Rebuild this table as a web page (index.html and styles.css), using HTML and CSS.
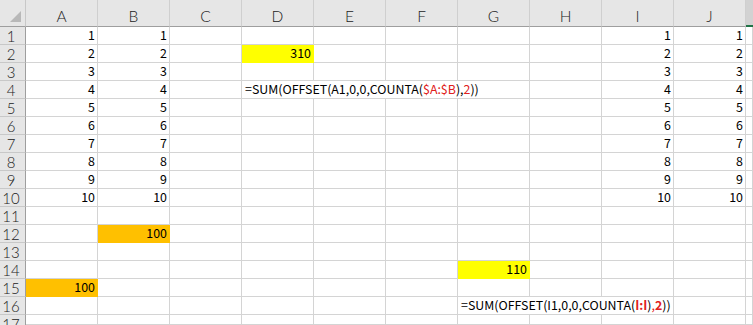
FILE: index.html
```html
<!DOCTYPE html>
<html>
<head>
<meta charset="utf-8">
<link rel="stylesheet" href="styles.css">
</head>
<body>
<div class="sheet">
  <div class="row head">
    <div class="corner"><span class="tri"></span></div>
    <div class="ch">A</div><div class="ch">B</div><div class="ch">C</div><div class="ch">D</div><div class="ch">E</div><div class="ch">F</div><div class="ch">G</div><div class="ch">H</div><div class="ch">I</div><div class="ch">J</div><div class="ch sel"></div>
  </div>
  <div class="row"><div class="rh">1</div><div class="c n">1</div><div class="c n">1</div><div class="c"></div><div class="c"></div><div class="c"></div><div class="c"></div><div class="c"></div><div class="c"></div><div class="c n">1</div><div class="c n">1</div><div class="c"></div></div>
  <div class="row"><div class="rh">2</div><div class="c n">2</div><div class="c n">2</div><div class="c"></div><div class="c n yellow">310</div><div class="c"></div><div class="c"></div><div class="c"></div><div class="c"></div><div class="c n">2</div><div class="c n">2</div><div class="c"></div></div>
  <div class="row"><div class="rh">3</div><div class="c n">3</div><div class="c n">3</div><div class="c"></div><div class="c"></div><div class="c"></div><div class="c"></div><div class="c"></div><div class="c"></div><div class="c n">3</div><div class="c n">3</div><div class="c"></div></div>
  <div class="row"><div class="rh">4</div><div class="c n">4</div><div class="c n">4</div><div class="c"></div><div class="c f span4">=SUM(OFFSET(A1,0,0,COUNTA(<span class="ref">$A:$B</span>),<span class="ref">2</span>))</div><div class="c"></div><div class="c n">4</div><div class="c n">4</div><div class="c"></div></div>
  <div class="row"><div class="rh">5</div><div class="c n">5</div><div class="c n">5</div><div class="c"></div><div class="c"></div><div class="c"></div><div class="c"></div><div class="c"></div><div class="c"></div><div class="c n">5</div><div class="c n">5</div><div class="c"></div></div>
  <div class="row"><div class="rh">6</div><div class="c n">6</div><div class="c n">6</div><div class="c"></div><div class="c"></div><div class="c"></div><div class="c"></div><div class="c"></div><div class="c"></div><div class="c n">6</div><div class="c n">6</div><div class="c"></div></div>
  <div class="row"><div class="rh">7</div><div class="c n">7</div><div class="c n">7</div><div class="c"></div><div class="c"></div><div class="c"></div><div class="c"></div><div class="c"></div><div class="c"></div><div class="c n">7</div><div class="c n">7</div><div class="c"></div></div>
  <div class="row"><div class="rh">8</div><div class="c n">8</div><div class="c n">8</div><div class="c"></div><div class="c"></div><div class="c"></div><div class="c"></div><div class="c"></div><div class="c"></div><div class="c n">8</div><div class="c n">8</div><div class="c"></div></div>
  <div class="row"><div class="rh">9</div><div class="c n">9</div><div class="c n">9</div><div class="c"></div><div class="c"></div><div class="c"></div><div class="c"></div><div class="c"></div><div class="c"></div><div class="c n">9</div><div class="c n">9</div><div class="c"></div></div>
  <div class="row"><div class="rh">10</div><div class="c n">10</div><div class="c n">10</div><div class="c"></div><div class="c"></div><div class="c"></div><div class="c"></div><div class="c"></div><div class="c"></div><div class="c n">10</div><div class="c n">10</div><div class="c"></div></div>
  <div class="row"><div class="rh">11</div><div class="c"></div><div class="c"></div><div class="c"></div><div class="c"></div><div class="c"></div><div class="c"></div><div class="c"></div><div class="c"></div><div class="c"></div><div class="c"></div><div class="c"></div></div>
  <div class="row"><div class="rh">12</div><div class="c"></div><div class="c n orange">100</div><div class="c"></div><div class="c"></div><div class="c"></div><div class="c"></div><div class="c"></div><div class="c"></div><div class="c"></div><div class="c"></div><div class="c"></div></div>
  <div class="row"><div class="rh">13</div><div class="c"></div><div class="c"></div><div class="c"></div><div class="c"></div><div class="c"></div><div class="c"></div><div class="c"></div><div class="c"></div><div class="c"></div><div class="c"></div><div class="c"></div></div>
  <div class="row"><div class="rh">14</div><div class="c"></div><div class="c"></div><div class="c"></div><div class="c"></div><div class="c"></div><div class="c"></div><div class="c n yellow">110</div><div class="c"></div><div class="c"></div><div class="c"></div><div class="c"></div></div>
  <div class="row"><div class="rh">15</div><div class="c n orange">100</div><div class="c"></div><div class="c"></div><div class="c"></div><div class="c"></div><div class="c"></div><div class="c"></div><div class="c"></div><div class="c"></div><div class="c"></div><div class="c"></div></div>
  <div class="row"><div class="rh">16</div><div class="c"></div><div class="c"></div><div class="c"></div><div class="c"></div><div class="c"></div><div class="c"></div><div class="c f span3">=SUM(OFFSET(I1,0,0,COUNTA(<b class="ref">I:I</b>)<span class="ref">,<b>2</b></span>))</div><div class="c"></div><div class="c"></div></div>
  <div class="row last"><div class="rh">17</div><div class="c"></div><div class="c"></div><div class="c"></div><div class="c"></div><div class="c"></div><div class="c"></div><div class="c"></div><div class="c"></div><div class="c"></div><div class="c"></div><div class="c"></div></div>
</div>
</body>
</html>
```

FILE: styles.css
```css
html, body {
  margin: 0;
  padding: 0;
  background: #ffffff;
  overflow: hidden;
}
body {
  width: 753px;
  height: 325px;
  font-family: "Noto Sans CJK KR", "Noto Sans", sans-serif;
  color: #000;
}
.sheet {
  display: flex;
  flex-direction: column;
  width: 753px;
  height: 325px;
  overflow: hidden;
}
.row {
  display: grid;
  grid-template-columns: 26px repeat(10, 72px) 1fr;
  height: 18px;
  flex: none;
}
.row.head {
  height: 27px;
}
.row.last {
  height: 10px;
}
.corner, .ch, .rh, .c {
  box-sizing: border-box;
  border-right: 1px solid #d4d4d4;
  border-bottom: 1px solid #d4d4d4;
  min-width: 0;
}
.corner {
  background: #e6e6e6;
  border-right: 1px solid #c8c8c8;
  border-bottom: 1px solid #9e9e9e;
  position: relative;
}
.tri {
  position: absolute;
  right: 4px;
  bottom: 4px;
  width: 0;
  height: 0;
  border-left: 11px solid transparent;
  border-bottom: 11px solid #b8b8b8;
}
.ch {
  background: #e6e6e6;
  border-right: 1px solid #cfcfcf;
  border-bottom: 1px solid #9e9e9e;
  font-family: "Lato", "Noto Sans", sans-serif;
  font-size: 15.5px;
  font-weight: 300;
  color: #222;
  text-align: center;
  line-height: 33px;
  overflow: hidden;
}
.ch.sel {
  background: #d2d2d2;
  border-right: none;
  border-bottom: 2px solid #217346;
}
.rh {
  background: #e6e6e6;
  border-right: 1px solid #9e9e9e;
  border-bottom: 1px solid #c8c8c8;
  font-family: "Lato", "Noto Sans", sans-serif;
  font-size: 15px;
  font-weight: 300;
  color: #222;
  text-align: center;
  padding-right: 3px;
  line-height: 19px;
  overflow: hidden;
}
.last .rh {
  border-bottom: none;
}
.c {
  font-size: 12.4px;
  line-height: 17px;
  white-space: nowrap;
}
.n {
  text-align: right;
  padding-right: 2px;
}
.f {
  padding-left: 3px;
  overflow: visible;
}
.span4 { grid-column: span 4; }
.span3 { grid-column: span 3; }
.yellow {
  background: #ffff00;
  border-color: #ffff00;
}
.orange {
  background: #ffc000;
  border-color: #ffc000;
}
.ref {
  color: #e02020;
}
b.ref, .ref b {
  font-weight: 700;
}
```
